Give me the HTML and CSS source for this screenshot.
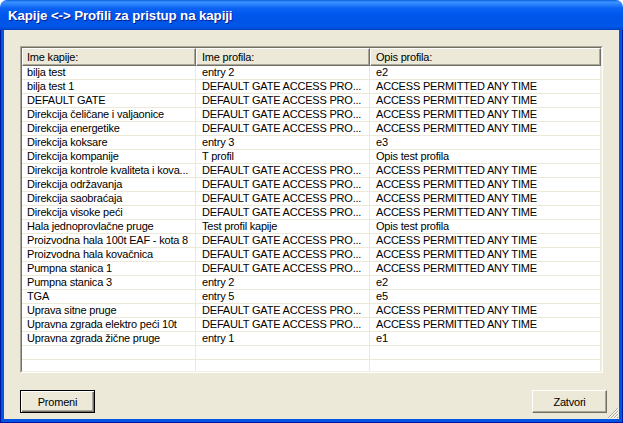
FILE: index.html
```html
<!DOCTYPE html>
<html>
<head>
<meta charset="utf-8">
<title>Kapije &lt;-&gt; Profili za pristup na kapiji</title>
<link rel="stylesheet" href="styles.css">
</head>
<body>
<div class="window">
  <div class="titlebar"><span class="title">Kapije &lt;-&gt; Profili za pristup na kapiji</span></div>
  <div class="frame">
    <div class="client">
      <div class="listbox">
        <div class="listinner">
          <div class="header">
            <div class="hcell">Ime kapije:</div>
            <div class="hcell">Ime profila:</div>
            <div class="hcell">Opis profila:</div>
          </div>
          <div class="row"><div class="cell">bilja test</div><div class="cell">entry 2</div><div class="cell">e2</div></div>
          <div class="row"><div class="cell">bilja test 1</div><div class="cell">DEFAULT GATE ACCESS PRO...</div><div class="cell">ACCESS PERMITTED ANY TIME</div></div>
          <div class="row"><div class="cell">DEFAULT GATE</div><div class="cell">DEFAULT GATE ACCESS PRO...</div><div class="cell">ACCESS PERMITTED ANY TIME</div></div>
          <div class="row"><div class="cell">Direkcija čeličane i valjaonice</div><div class="cell">DEFAULT GATE ACCESS PRO...</div><div class="cell">ACCESS PERMITTED ANY TIME</div></div>
          <div class="row"><div class="cell">Direkcija energetike</div><div class="cell">DEFAULT GATE ACCESS PRO...</div><div class="cell">ACCESS PERMITTED ANY TIME</div></div>
          <div class="row"><div class="cell">Direkcija koksare</div><div class="cell">entry 3</div><div class="cell">e3</div></div>
          <div class="row"><div class="cell">Direkcija kompanije</div><div class="cell">T profil</div><div class="cell">Opis test profila</div></div>
          <div class="row"><div class="cell">Direkcija kontrole kvaliteta i kova...</div><div class="cell">DEFAULT GATE ACCESS PRO...</div><div class="cell">ACCESS PERMITTED ANY TIME</div></div>
          <div class="row"><div class="cell">Direkcija održavanja</div><div class="cell">DEFAULT GATE ACCESS PRO...</div><div class="cell">ACCESS PERMITTED ANY TIME</div></div>
          <div class="row"><div class="cell">Direkcija saobraćaja</div><div class="cell">DEFAULT GATE ACCESS PRO...</div><div class="cell">ACCESS PERMITTED ANY TIME</div></div>
          <div class="row"><div class="cell">Direkcija visoke peći</div><div class="cell">DEFAULT GATE ACCESS PRO...</div><div class="cell">ACCESS PERMITTED ANY TIME</div></div>
          <div class="row"><div class="cell">Hala jednoprovlačne pruge</div><div class="cell">Test profil kapije</div><div class="cell">Opis test profila</div></div>
          <div class="row"><div class="cell">Proizvodna hala 100t EAF - kota 8</div><div class="cell">DEFAULT GATE ACCESS PRO...</div><div class="cell">ACCESS PERMITTED ANY TIME</div></div>
          <div class="row"><div class="cell">Proizvodna hala kovačnica</div><div class="cell">DEFAULT GATE ACCESS PRO...</div><div class="cell">ACCESS PERMITTED ANY TIME</div></div>
          <div class="row"><div class="cell">Pumpna stanica 1</div><div class="cell">DEFAULT GATE ACCESS PRO...</div><div class="cell">ACCESS PERMITTED ANY TIME</div></div>
          <div class="row"><div class="cell">Pumpna stanica 3</div><div class="cell">entry 2</div><div class="cell">e2</div></div>
          <div class="row"><div class="cell">TGA</div><div class="cell">entry 5</div><div class="cell">e5</div></div>
          <div class="row"><div class="cell">Uprava sitne pruge</div><div class="cell">DEFAULT GATE ACCESS PRO...</div><div class="cell">ACCESS PERMITTED ANY TIME</div></div>
          <div class="row"><div class="cell">Upravna zgrada elektro peći 10t</div><div class="cell">DEFAULT GATE ACCESS PRO...</div><div class="cell">ACCESS PERMITTED ANY TIME</div></div>
          <div class="row"><div class="cell">Upravna zgrada žične pruge</div><div class="cell">entry 1</div><div class="cell">e1</div></div>
          <div class="row"><div class="cell"></div><div class="cell"></div><div class="cell"></div></div>
          <div class="row"><div class="cell"></div><div class="cell"></div><div class="cell"></div></div>
        </div>
      </div>
      <div class="buttons">
        <button class="btn default">Promeni</button>
        <button class="btn">Zatvori</button>
      </div>
      <svg class="grip" width="12" height="12" viewBox="0 0 12 12">
        <g stroke-width="1" shape-rendering="crispEdges">
          <path d="M11 1 L1 11" stroke="#ACA899"/>
          <path d="M12 1 L1 12" stroke="#fff"/>
          <path d="M11 4 L4 11" stroke="#ACA899"/>
          <path d="M12 4 L4 12" stroke="#fff"/>
          <path d="M11 7 L7 11" stroke="#ACA899"/>
          <path d="M12 7 L7 12" stroke="#fff"/>
          <path d="M11 10 L10 11" stroke="#ACA899"/>
        </g>
      </svg>
    </div>
  </div>
</div>
</body>
</html>
```

FILE: styles.css
```css
* { box-sizing: border-box; }

body {
  margin: 0;
  background: #ffffff;
  font-family: "Liberation Sans", Arial, sans-serif;
  font-size: 11px;
  letter-spacing: -0.2px;
  color: #000;
}

.window {
  width: 623px;
  height: 423px;
  display: flex;
  flex-direction: column;
}

.titlebar {
  height: 30px;
  flex-shrink: 0;
  border-radius: 7px 7px 0 0;
  background: linear-gradient(to bottom,
    #0A5DDB 0px, #3D93FF 2px, #2C86FF 4px, #0C63F3 8px,
    #0058EE 14px, #0054E6 22px, #0058EC 26px, #0049D4 29px, #003AB4 30px);
  display: flex;
  align-items: center;
  padding: 1px 8px 0;
}

.title {
  color: #fff;
  font-weight: bold;
  font-size: 13.3px;
  letter-spacing: -0.1px;
  text-shadow: 1px 1px 0 #0A1E8C;
}

.frame {
  flex: 1;
  display: flex;
  background: #0055E5;
  padding: 0 3px 3px;
  border: solid #00139C;
  border-width: 0 1px 1px;
}

.client {
  flex: 1;
  background: #ECE9D8;
  padding: 16px 16px 6px;
  display: flex;
  flex-direction: column;
  position: relative;
}

.listbox {
  height: 327px;
  flex-shrink: 0;
  border: 1px solid;
  border-color: #ACA899 #ffffff #ffffff #ACA899;
}

.listinner {
  height: 100%;
  overflow: hidden;
  background: #fff;
  border: 1px solid;
  border-color: #716F64 #F1EFE2 #F1EFE2 #716F64;
}

.header,
.row {
  display: grid;
  grid-template-columns: 174px 174px 1fr;
}

.header { height: 18px; }

.hcell {
  background: #ECE9D8;
  border: 1px solid;
  border-color: #ffffff #716F64 #716F64 #ffffff;
  box-shadow: inset -1px -1px 0 #ACA899;
  padding: 1px 0 0 4px;
  line-height: 14px;
  white-space: nowrap;
  overflow: hidden;
}

.hcell + .hcell { padding-left: 5px; }

.row { height: 14px; }

.cell {
  border-right: 1px solid #ECE9D8;
  border-bottom: 1px solid #ECE9D8;
  padding-left: 5px;
  line-height: 13px;
  white-space: nowrap;
  overflow: hidden;
}

.cell + .cell { padding-left: 6px; }

.buttons {
  display: flex;
  justify-content: space-between;
  margin-top: 17px;
  margin-right: -4px;
}

.btn {
  width: 75px;
  height: 23px;
  padding: 0;
  background: #ECE9D8;
  border: 1px solid;
  border-color: #ffffff #716F64 #716F64 #ffffff;
  box-shadow: inset -1px -1px 0 #ACA899;
  font-family: "Liberation Sans", Arial, sans-serif;
  font-size: 11px;
  letter-spacing: -0.2px;
  color: #000;
}

.btn.default {
  border-color: #000;
  box-shadow: inset 1px 1px 0 #ffffff, inset -1px -1px 0 #716F64, inset -2px -2px 0 #ACA899;
}

.grip {
  position: absolute;
  right: 0;
  bottom: 0;
}
```
